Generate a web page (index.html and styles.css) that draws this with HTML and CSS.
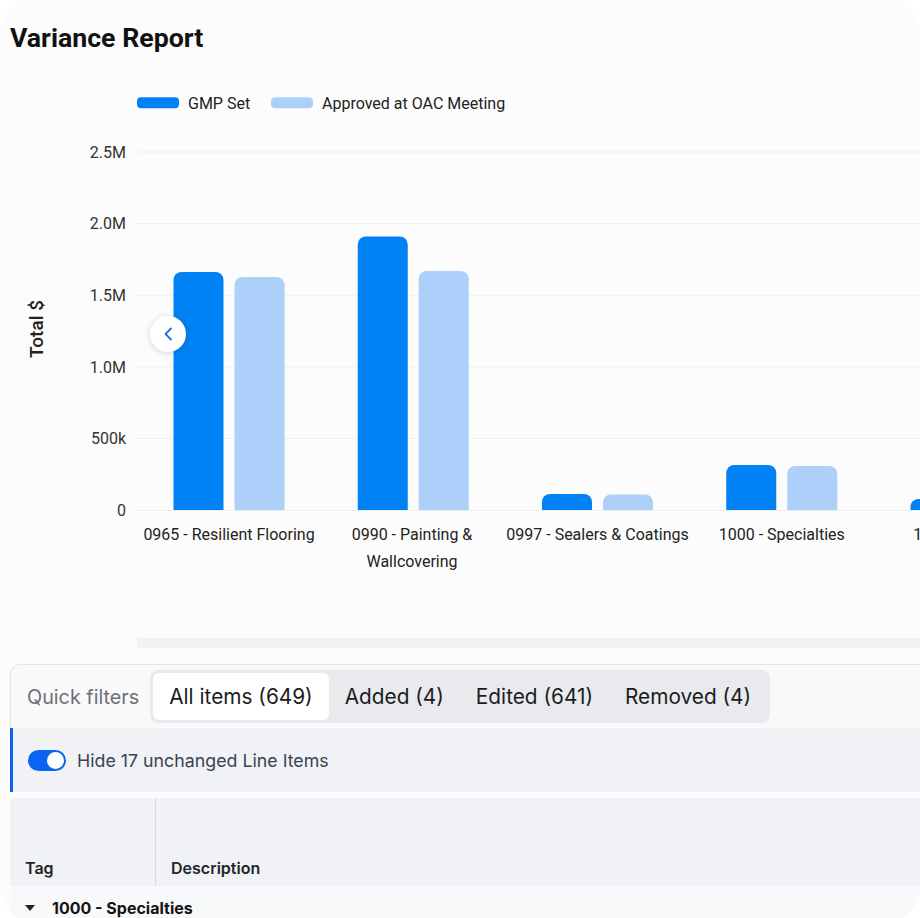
FILE: index.html
```html
<!DOCTYPE html>
<html lang="en">
<head>
<meta charset="utf-8">
<title>Variance Report</title>
<link rel="stylesheet" href="styles.css">
</head>
<body>
<div class="card">
  <header class="report-head">
    <h1 class="title">Variance Report</h1>
  </header>

  <svg class="chart" width="920" height="590" viewBox="0 60 920 590" xmlns="http://www.w3.org/2000/svg">
    <g class="legend">
      <rect x="137" y="97.3" width="42" height="11" rx="4" class="c-dark"/>
      <text x="188" y="108.8">GMP Set</text>
      <rect x="271" y="97.3" width="42" height="11" rx="4" class="c-light"/>
      <text x="322" y="108.8">Approved at OAC Meeting</text>
    </g>

    <g class="grid">
      <line x1="137" y1="152" x2="920" y2="152"/>
      <line x1="137" y1="223.6" x2="920" y2="223.6"/>
      <line x1="137" y1="295.2" x2="920" y2="295.2"/>
      <line x1="137" y1="366.8" x2="920" y2="366.8"/>
      <line x1="137" y1="438.4" x2="920" y2="438.4"/>
      <line x1="137" y1="510.5" x2="920" y2="510.5"/>
    </g>

    <g class="yaxis">
      <text x="126" y="157.7">2.5M</text>
      <text x="126" y="229.3">2.0M</text>
      <text x="126" y="300.9">1.5M</text>
      <text x="126" y="372.5">1.0M</text>
      <text x="126" y="444.1">500k</text>
      <text x="126" y="515.7">0</text>
    </g>

    <text class="ytitle" transform="translate(43 329) rotate(-90)">Total $</text>

    <g class="bars">
      <path class="c-dark" d="M173.5 510V280a8 8 0 0 1 8-8h34a8 8 0 0 1 8 8V510Z"/>
      <path class="c-light" d="M234.5 510V285a8 8 0 0 1 8-8h34a8 8 0 0 1 8 8V510Z"/>
      <path class="c-dark" d="M357.75 510V244.5a8 8 0 0 1 8-8h34a8 8 0 0 1 8 8V510Z"/>
      <path class="c-light" d="M418.75 510V279a8 8 0 0 1 8-8h34a8 8 0 0 1 8 8V510Z"/>
      <path class="c-dark" d="M542 510V502a8 8 0 0 1 8-8h34a8 8 0 0 1 8 8V510Z"/>
      <path class="c-light" d="M603 510V502.5a8 8 0 0 1 8-8h34a8 8 0 0 1 8 8V510Z"/>
      <path class="c-dark" d="M726.25 510V473a8 8 0 0 1 8-8h34a8 8 0 0 1 8 8V510Z"/>
      <path class="c-light" d="M787.25 510V474a8 8 0 0 1 8-8h34a8 8 0 0 1 8 8V510Z"/>
      <path class="c-dark" d="M910.5 510V507a8 8 0 0 1 8-8h34a8 8 0 0 1 8 8V510Z"/>
    </g>

    <g class="xaxis">
      <text x="229" y="540">0965 - Resilient Flooring</text>
      <text x="412" y="540">0990 - Painting &amp;</text>
      <text x="412" y="566.5">Wallcovering</text>
      <text x="597.5" y="540">0997 - Sealers &amp; Coatings</text>
      <text x="781.75" y="540">1000 - Specialties</text>
      <text x="966" y="540">1040 - Signage</text>
    </g>

    <g class="nav-btn">
      <circle cx="168" cy="334" r="18" class="nav-circle"/>
      <polyline points="171,328.5 165.5,334 171,339.5" class="nav-chev"/>
    </g>

    <rect x="137" y="638" width="800" height="10.5" class="scroll-track"/>
  </svg>

  <section class="lower">
    <div class="quick">
      <span class="quick-label">Quick filters</span>
      <div class="segmented">
        <span class="seg seg-active">All items (649)</span>
        <span class="seg">Added (4)</span>
        <span class="seg">Edited (641)</span>
        <span class="seg">Removed (4)</span>
      </div>
    </div>

    <div class="banner">
      <span class="toggle"><span class="knob"></span></span>
      <span class="banner-text">Hide 17 unchanged Line Items</span>
    </div>

    <div class="table">
      <div class="thead">
        <div class="th th-tag">Tag</div>
        <div class="th th-desc">Description</div>
      </div>
      <div class="group-row">
        <span class="caret"></span>
        <span class="group-name">1000 - Specialties</span>
      </div>
    </div>
  </section>
</div>
</body>
</html>
```
FILE: styles.css
```css
html, body {
  margin: 0;
  padding: 0;
  background: #ffffff;
}

body {
  width: 920px;
  height: 918px;
  overflow: hidden;
  font-family: Inter, "Noto Sans", sans-serif;
}

.card {
  margin-top: -5px;
  height: 930px;
  border-radius: 40px;
  overflow: hidden;
  background: #fcfcfc;
}

.report-head {
  box-sizing: border-box;
  height: 65px;
  padding: 27px 10px 0;
}

.title {
  margin: 0;
  font-family: Roboto, "Liberation Sans", sans-serif;
  font-weight: 700;
  font-size: 26.7px;
  line-height: 32px;
  color: #111111;
}

.chart {
  display: block;
}

.chart text {
  font-family: Roboto, "Liberation Sans", sans-serif;
  font-size: 16px;
  fill: #222222;
}

.c-dark { fill: #0082f5; }
.c-light { fill: #add0fb; }

.grid line {
  stroke: #eeeeee;
  stroke-width: 1;
}

.yaxis text {
  text-anchor: end;
  fill: #333333;
}

.chart .ytitle {
  font-size: 19px;
  font-weight: 500;
  text-anchor: middle;
  fill: #222222;
}

.xaxis text {
  text-anchor: middle;
}

.nav-circle {
  fill: #ffffff;
  filter: drop-shadow(0 1px 3px rgba(0, 0, 0, 0.16));
}

.nav-chev {
  fill: none;
  stroke: #1b6fe4;
  stroke-width: 1.8;
  stroke-linecap: round;
  stroke-linejoin: round;
}

.scroll-track {
  fill: #f2f2f2;
}

.lower {
  margin: 14px -60px 0 10px;
}

.quick {
  box-sizing: border-box;
  height: 64px;
  display: flex;
  align-items: center;
  gap: 11px;
  padding: 0 16px;
  border-top: 1px solid #e4e4e7;
  border-left: 1px solid #e4e4e7;
  border-top-left-radius: 10px;
  background: #f9f9fa;
}

.quick-label {
  font-size: 19.8px;
  color: #6c6f75;
}

.segmented {
  display: flex;
  padding: 3px;
  border-radius: 8px;
  background: #e9eaee;
}

.seg {
  height: 47px;
  line-height: 47px;
  padding: 0 16px;
  font-size: 20.8px;
  color: #1c1c1e;
  border-radius: 6px;
}

.seg-active {
  background: #ffffff;
}

.banner {
  box-sizing: border-box;
  height: 64px;
  display: flex;
  align-items: center;
  gap: 11px;
  padding-left: 15px;
  border-left: 3px solid #0b62ee;
  background: #f0f2f6;
}

.toggle {
  position: relative;
  width: 38px;
  height: 21px;
  border-radius: 11px;
  background: #0a64f2;
  flex: none;
}

.knob {
  position: absolute;
  top: 2px;
  right: 2px;
  width: 17px;
  height: 17px;
  border-radius: 50%;
  background: #ffffff;
}

.banner-text {
  font-size: 17.8px;
  color: #3a4254;
}

.table {
  margin-top: 6px;
}

.thead {
  height: 88px;
  display: grid;
  grid-template-columns: 146px 1fr;
  background: #f1f2f6;
}

.th {
  display: flex;
  align-items: flex-end;
  padding: 0 0 8px 15px;
  font-size: 16px;
  line-height: 20px;
  font-weight: 600;
  color: #222428;
}

.th-tag {
  border-right: 1px solid #d6d9df;
}

.group-row {
  height: 44px;
  display: flex;
  align-items: center;
  gap: 17px;
  padding-left: 15px;
  background: #f8f9fa;
}

.caret {
  width: 0;
  height: 0;
  border-left: 5.5px solid transparent;
  border-right: 5.5px solid transparent;
  border-top: 6px solid #222222;
}

.group-name {
  font-size: 16px;
  line-height: 44px;
  font-weight: 700;
  color: #141414;
}
```
